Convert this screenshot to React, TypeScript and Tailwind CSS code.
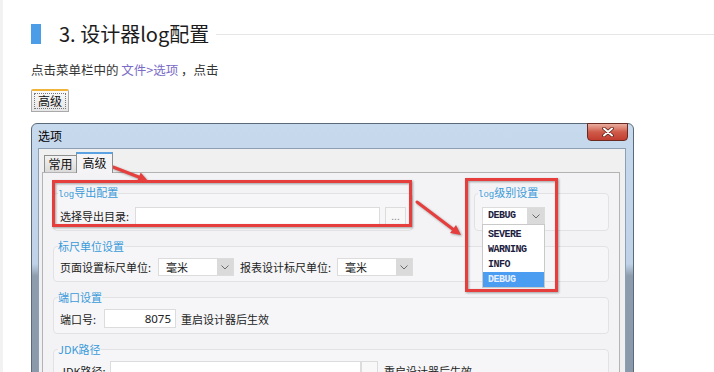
import React from "react";

function Chevron() {
  return (
    <svg width="8" height="5" viewBox="0 0 8 5">
      <path d="M0.5 0.5 L4 4 L7.5 0.5" fill="none" stroke="#6a6a6a" strokeWidth="1" />
    </svg>
  );
}

export default function App() {
  return (
    <div className="relative w-[714px] h-[372px] overflow-hidden bg-white flex font-['Noto_Sans_CJK_SC',sans-serif]">
      <div className="w-[3px] shrink-0 bg-[#f2f2f2]" />
      <div className="flex-1 pl-[28px] flex flex-col">
        {/* heading */}
        <div className="mt-[24px] flex items-center h-[20px] shrink-0">
          <div className="w-[10px] h-[20px] bg-[#4c9de8]" />
          <div className="ml-[18px] text-[20px] leading-[20px] text-[#1c1c1c]">3. 设计器log配置</div>
          <div className="ml-[7px] flex-1 h-px bg-[#e6e6e6]" />
        </div>
        <p className="mt-[18px] text-[12.5px] leading-[16px] text-[#333] shrink-0">
          点击菜单栏中的 <span className="text-[#7a6cc6]">文件&gt;选项</span> ，点击
        </p>
        {/* button image */}
        <div className="mt-[11px] w-[38px] h-[23px] shrink-0 border border-[#a9a9a9] border-t-2 border-t-[#f0b43a] rounded-t-[2px] bg-gradient-to-b from-[#fafafa] to-[#e6e6e6] p-[2px]">
          <div className="h-full border border-dotted border-[#777] flex items-center justify-center text-[12px] leading-[14px] text-[#111]">高级</div>
        </div>
        {/* window */}
        <div className="mt-[11px] w-[603px] h-[270px] shrink-0 border border-[#5b6a7a] rounded-t-[6px] bg-[linear-gradient(to_bottom,#c7d9ed_0px,#bfd2e7_140px,#8e9dad_152px,#8a99aa_100%)] flex flex-col">
          <div className="h-[24px] shrink-0 flex items-start justify-between pl-[6px] pr-[5px]">
            <span className="mt-[4px] text-[12px] leading-[16px] text-black">选项</span>
            <div className="-mt-px w-[41px] h-[18px] rounded-b-[4px] border border-[#6a2a22] bg-gradient-to-b from-[#e9ae9f] via-[#cf5a4a] to-[#c23d2f] flex items-center justify-center">
              <svg width="12" height="10" viewBox="0 0 12 10">
                <path d="M2 1.5 L10 8.5 M10 1.5 L2 8.5" stroke="#5a1c14" strokeWidth="3.5" strokeLinecap="round" />
                <path d="M2 1.5 L10 8.5 M10 1.5 L2 8.5" stroke="#ffffff" strokeWidth="2" strokeLinecap="round" />
              </svg>
            </div>
          </div>
          <div className="ml-[6px] mr-[7px] flex-1 border border-[#8d9fb3] bg-[#f0f0f0] pt-[3px] pl-[3px] pr-[5px] flex flex-col">
            {/* tabs */}
            <div className="relative z-10 flex items-end pl-[2px] h-[20px] shrink-0">
              <div className="w-[33px] h-[17px] border border-b-0 border-[#8e8f8f] bg-gradient-to-b from-[#f2f2f2] to-[#dadada] text-[12px] leading-[16px] text-[#111] flex justify-center">常用</div>
              <div className="w-[37px] h-[21px] -mb-px -ml-px border border-b-0 border-[#8e8f8f] border-t-2 border-t-[#5aa2e2] bg-[#f4f4f6] text-[12px] leading-[16px] text-[#111] flex justify-center pt-[1px]">高级</div>
            </div>
            {/* tab panel */}
            <div className="flex-1 border border-[#b3b3b3] bg-[#f3f3f5] px-[10px] pt-[12px] flex flex-col">
              <div className="flex items-start">
                <fieldset className="w-[360px] border border-[#e2e2e4] rounded-[4px] bg-[#f6f6f8]">
                  <legend className="ml-[4px] text-[11px] leading-[14px] text-[#3a9ad9]">
                    <span className="font-['Liberation_Mono',monospace] text-[9px]">log</span>导出配置
                  </legend>
                  <div className="pt-[5px] pb-[5px] pl-[6px] flex items-center text-[11px] leading-[18px] text-[#222]">
                    <span className="w-[75px]">选择导出目录:</span>
                    <div className="w-[245px] h-[18px] border border-[#dcdcdc] bg-white" />
                    <div className="ml-[5px] w-[21px] h-[18px] border border-[#dcdcdc] bg-[#f8f8f8] text-[10px] leading-[16px] text-[#888] text-center">...</div>
                  </div>
                </fieldset>
                <fieldset className="ml-auto w-[135px] border border-[#e2e2e4] rounded-[4px] bg-[#f6f6f8]">
                  <legend className="ml-[3px] text-[11px] leading-[14px] text-[#3a9ad9]">
                    <span className="font-['Liberation_Mono',monospace] text-[9px]">log</span>级别设置
                  </legend>
                  <div className="pt-[5px] pb-[5px] pl-[7px]">
                    <div className="relative w-[63px] h-[18px] flex border border-[#dcdcdc] bg-white">
                      <span className="flex-1 pl-[5px] font-['Liberation_Mono',monospace] font-bold text-[10px] tracking-[-0.5px] leading-[16px] text-[#1d1d40]">DEBUG</span>
                      <div className="w-[17px] bg-[#dadada] flex items-center justify-center"><Chevron /></div>
                      {/* dropdown list */}
                      <div className="absolute left-[-1px] top-[16px] w-[63px] border border-[#c9c9c9] bg-white pt-[2px] z-20 font-['Liberation_Mono',monospace] font-bold text-[10px] tracking-[-0.5px] leading-[15px] text-[#1d1d40]">
                        <div className="h-[15px] pl-[5px]">SEVERE</div>
                        <div className="h-[15px] pl-[5px]">WARNING</div>
                        <div className="h-[15px] pl-[5px]">INFO</div>
                        <div className="h-[15px] pl-[5px] bg-[#4a9df0] text-[#e6efff]">DEBUG</div>
                      </div>
                    </div>
                  </div>
                </fieldset>
              </div>

              <fieldset className="mt-[8px] border border-[#e2e2e4] rounded-[4px] bg-[#f6f6f8]">
                <legend className="ml-[4px] text-[11px] leading-[14px] text-[#3a9ad9]">标尺单位设置</legend>
                <div className="pt-[5px] pb-[5px] pl-[6px] flex items-center text-[11px] leading-[18px] text-[#222]">
                  <span className="w-[98px]">页面设置标尺单位:</span>
                  <div className="w-[76px] h-[18px] flex border border-[#dcdcdc] bg-white">
                    <span className="flex-1 pl-[7px] leading-[16px]">毫米</span>
                    <div className="w-[16px] bg-[#dadada] flex items-center justify-center"><Chevron /></div>
                  </div>
                  <span className="ml-[6px] w-[97px]">报表设计标尺单位:</span>
                  <div className="w-[76px] h-[18px] flex border border-[#dcdcdc] bg-white">
                    <span className="flex-1 pl-[7px] leading-[16px]">毫米</span>
                    <div className="w-[16px] bg-[#dadada] flex items-center justify-center"><Chevron /></div>
                  </div>
                </div>
              </fieldset>

              <fieldset className="mt-[8px] border border-[#e2e2e4] rounded-[4px] bg-[#f6f6f8]">
                <legend className="ml-[4px] text-[11px] leading-[14px] text-[#3a9ad9]">端口设置</legend>
                <div className="pt-[5px] pb-[5px] pl-[6px] flex items-center text-[11px] leading-[18px] text-[#222]">
                  <span className="w-[44px]">端口号:</span>
                  <div className="w-[72px] h-[19px] border border-[#dcdcdc] bg-white text-right pr-[4px] font-['Noto_Sans',sans-serif] text-[11.5px] leading-[17px] text-[#222]">8075</div>
                  <span className="ml-[5px]">重启设计器后生效</span>
                </div>
              </fieldset>

              <fieldset className="mt-[8px] border border-[#e2e2e4] rounded-[4px] bg-[#f6f6f8]">
                <legend className="ml-[4px] text-[11px] leading-[14px] text-[#3a9ad9]">JDK路径</legend>
                <div className="pt-[5px] pb-[5px] pl-[6px] flex items-center text-[11px] leading-[18px] text-[#222]">
                  <span className="w-[50px]">JDK路径:</span>
                  <div className="w-[251px] h-[19px] border border-[#dcdcdc] bg-white" />
                  <div className="w-[17px] h-[19px] border border-[#dcdcdc] bg-[#f8f8f8] text-[10px] leading-[17px] text-[#888] text-center">...</div>
                  <span className="ml-[6px]">重启设计器后生效</span>
                </div>
              </fieldset>
            </div>
          </div>
        </div>
      </div>

      {/* annotations */}
      <svg className="absolute left-0 top-0 pointer-events-none drop-shadow-[1px_1px_1px_rgba(0,0,0,0.35)]" width="714" height="372" viewBox="0 0 714 372">
        <rect x="53.5" y="181.5" width="357" height="44" fill="none" stroke="#e63d3d" strokeWidth="3" />
        <rect x="466.5" y="179.5" width="90" height="111" fill="none" stroke="#e63d3d" strokeWidth="3" />
        <line x1="113" y1="167" x2="140" y2="177.5" stroke="#e63d3d" strokeWidth="3" strokeLinecap="round" />
        <polygon points="148,181 136.9,181.8 140.7,172.6" fill="#e63d3d" />
        <line x1="417" y1="202" x2="454" y2="230" stroke="#e63d3d" strokeWidth="3" strokeLinecap="round" />
        <polygon points="461,235 450,233 456,225" fill="#e63d3d" />
      </svg>
    </div>
  );
}
